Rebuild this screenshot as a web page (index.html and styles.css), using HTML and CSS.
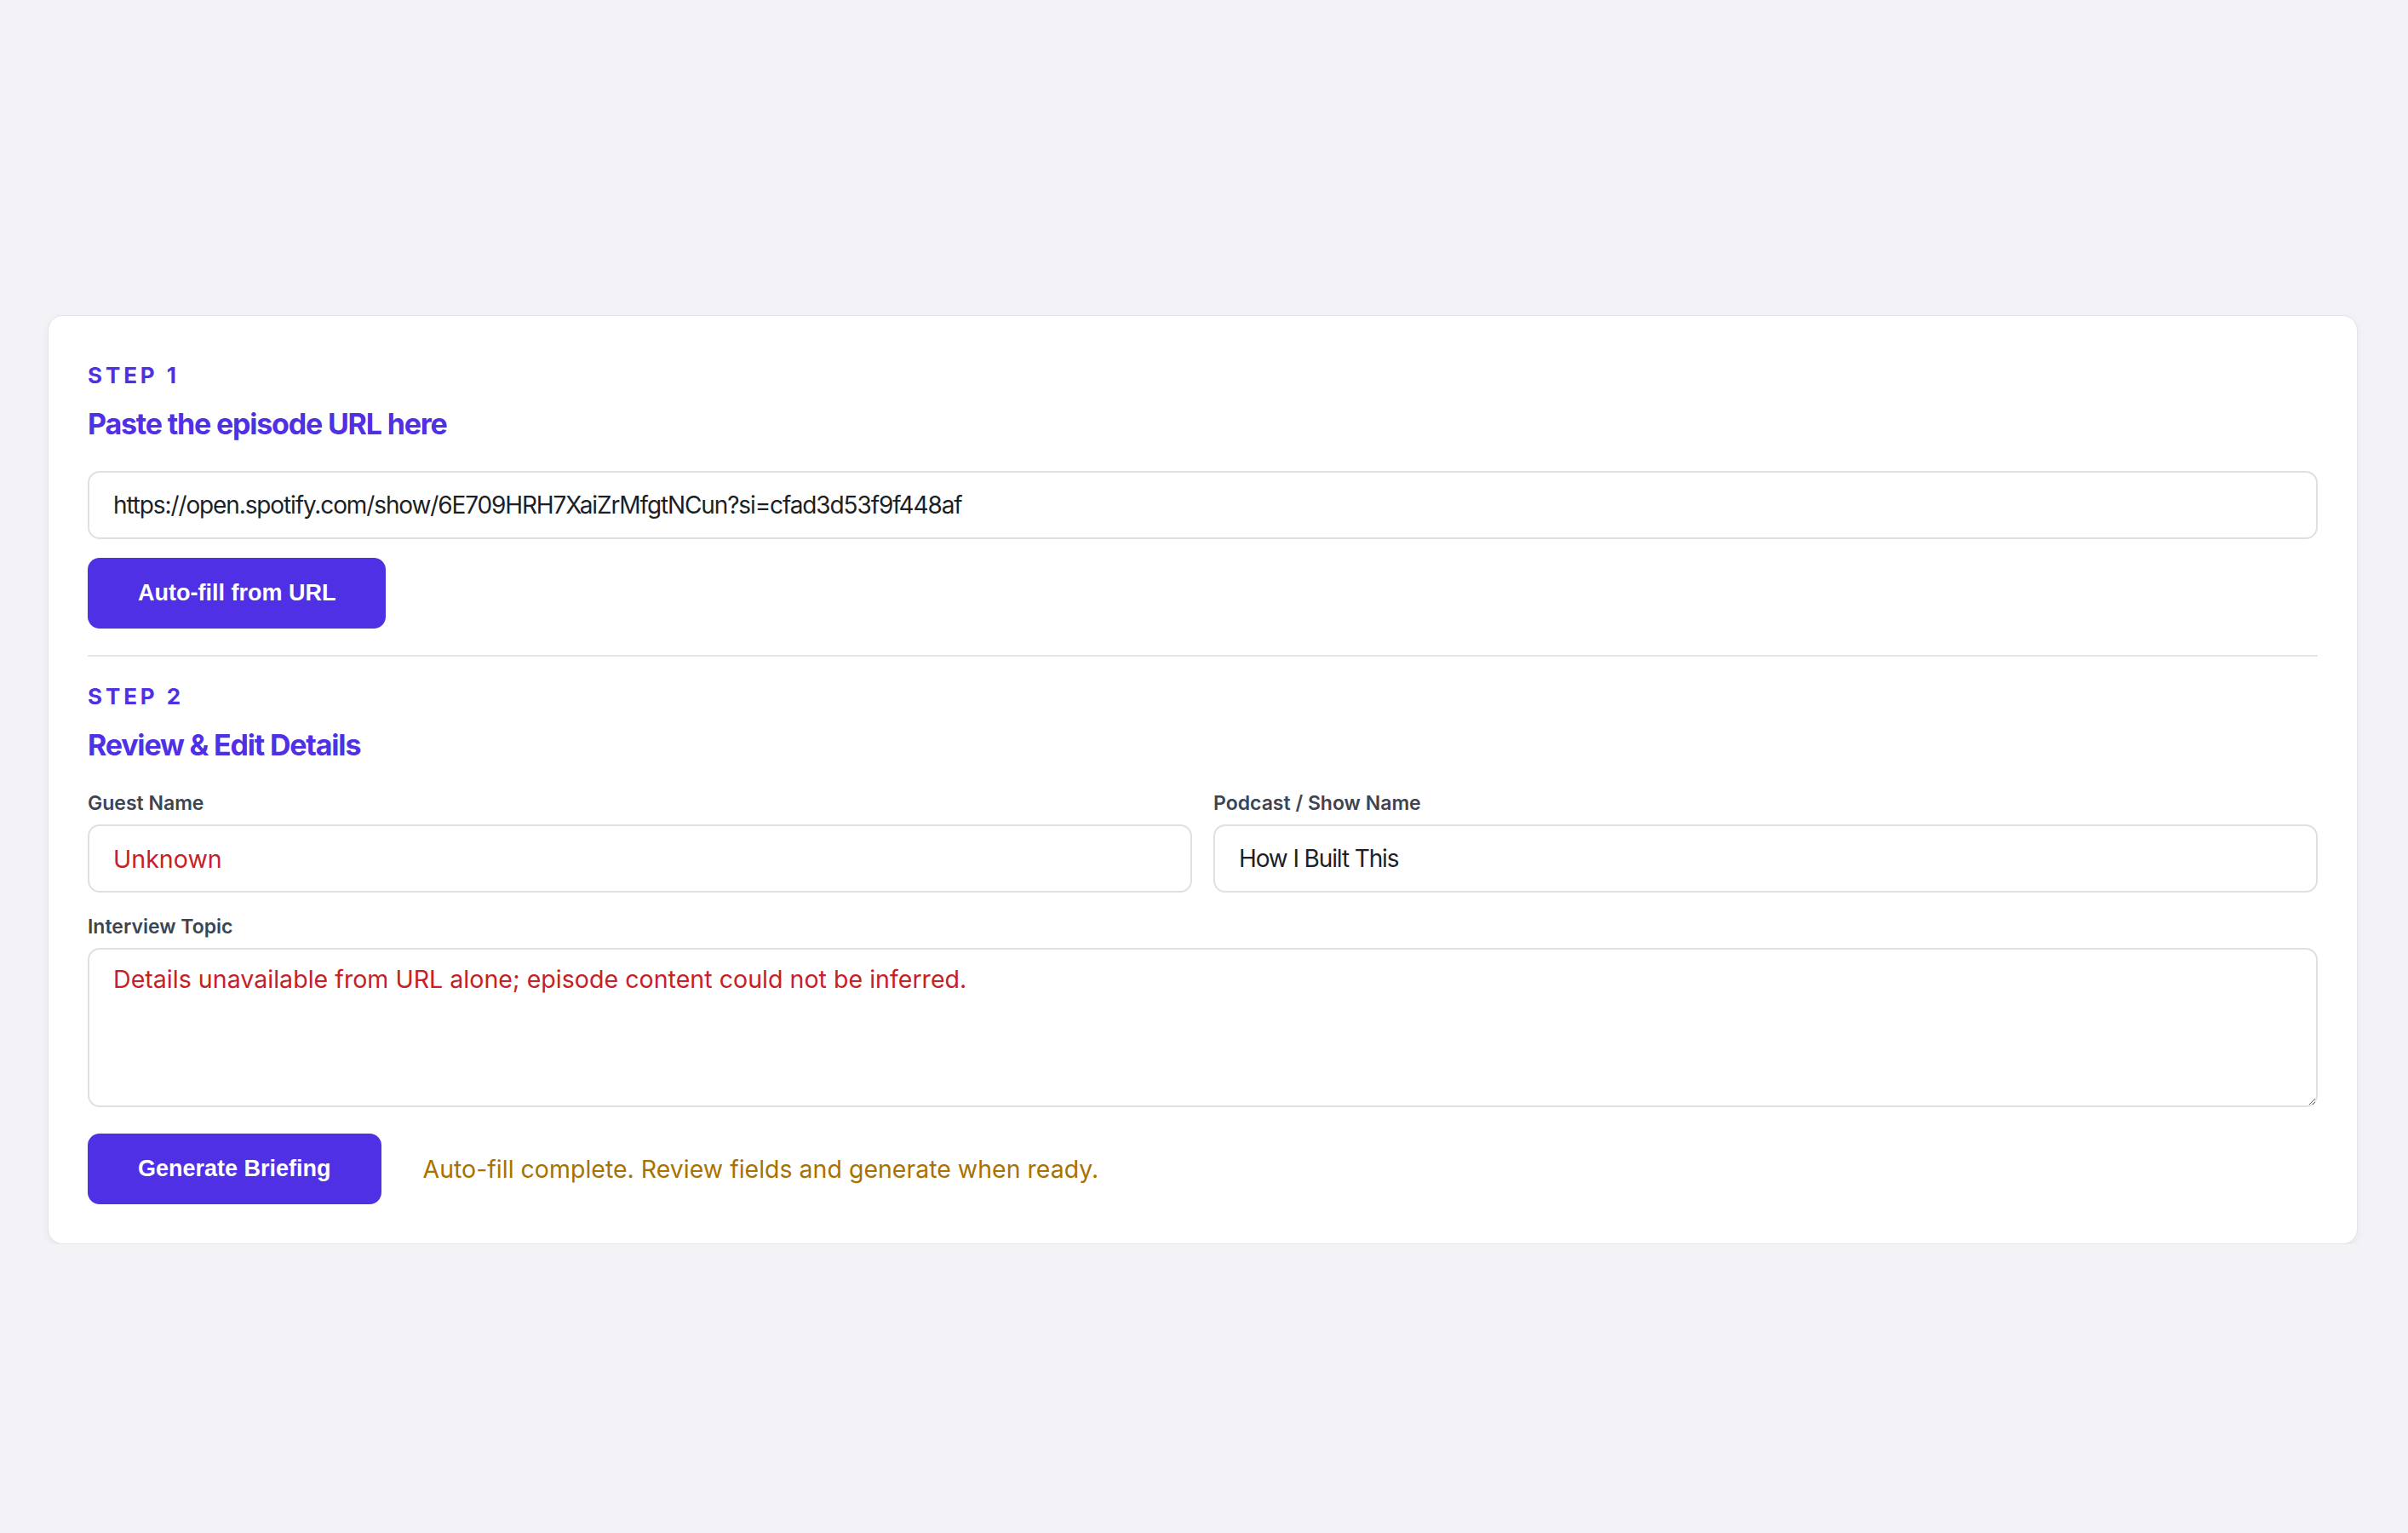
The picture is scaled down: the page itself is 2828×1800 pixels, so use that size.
FILE: index.html
```html
<!DOCTYPE html>
<html lang="en">
<head>
<meta charset="UTF-8" />
<meta name="viewport" content="width=device-width, initial-scale=1.0"/>
<title>Episode Briefing</title>
<link rel="stylesheet" href="styles.css">
</head>
<body>
<div class="page">
  <div class="card">
    <!-- Step 1: URL -->
    <section class="step">
      <div class="step-label">Step 1</div>
      <h2 class="step-title">Paste the episode URL here</h2>
      <input class="field" type="text" id="urlInput" value="https://open.spotify.com/show/6E709HRH7XaiZrMfgtNCun?si=cfad3d53f9f448af" />
      <div class="actions">
        <button class="btn">Auto-fill from URL</button>
      </div>
    </section>

    <hr class="divider" />

    <!-- Step 2: details -->
    <section class="step">
      <div class="step-label">Step 2</div>
      <h2 class="step-title">Review &amp; Edit Details</h2>
      <div class="row">
        <label class="field-group">
          <span class="field-label">Guest Name</span>
          <input class="field warn" type="text" id="guestInput" value="Unknown" />
        </label>
        <label class="field-group">
          <span class="field-label">Podcast / Show Name</span>
          <input class="field" type="text" id="showInput" value="How I Built This" />
        </label>
      </div>
      <label class="field-group topic">
        <span class="field-label">Interview Topic</span>
        <textarea class="field warn" id="topicInput">Details unavailable from URL alone; episode content could not be inferred.</textarea>
      </label>
      <div class="actions final">
        <button class="btn">Generate Briefing</button>
        <span class="status">Auto-fill complete. Review fields and generate when ready.</span>
      </div>
    </section>
  </div>
</div>
</body>
</html>
```

FILE: styles.css
```css
body {
  margin: 0;
  background: #f2f2f7;
  font-family: Inter, "Noto Sans", sans-serif;
  color: #1c1f26;
}
.page {
  padding: 370px 59px 0 56px;
}
.card {
  background: #fff;
  border: 1px solid #e3e3e9;
  border-radius: 18px;
  box-shadow: 0 3px 10px rgba(0, 0, 0, 0.05);
  padding: 54px 46px 46px;
}
.step {
  display: flex;
  flex-direction: column;
}
.step-label {
  font-size: 26px;
  line-height: 32px;
  font-weight: 700;
  letter-spacing: 0.15em;
  text-transform: uppercase;
  color: #5030e5;
}
.step-title {
  margin: 20px 0 34px;
  font-size: 34px;
  line-height: 42px;
  font-weight: 700;
  letter-spacing: -0.035em;
  color: #5030e5;
}
.field {
  box-sizing: border-box;
  width: 100%;
  height: 80px;
  padding: 0 28px;
  border: 2px solid #dfe0e6;
  border-radius: 14px;
  background: #fff;
  font-family: Inter, "Noto Sans", sans-serif;
  font-size: 28px;
  letter-spacing: -0.04em;
  color: #1c1f26;
}
.field.warn {
  font-size: 28.6px;
  letter-spacing: 0;
  color: #c62127;
}
textarea.field {
  display: block;
  height: 187px;
  padding: 18px 28px;
  line-height: 34px;
}
.actions {
  display: flex;
  align-items: center;
  gap: 49px;
  margin-top: 22px;
}
.actions.final {
  margin-top: 31px;
}
.btn {
  padding: 26px 59px;
  border: none;
  border-radius: 14px;
  background: #5030e5;
  color: #fff;
  font-family: "Liberation Sans", Arial, sans-serif;
  font-size: 27px;
  line-height: 31px;
  font-weight: 700;
  cursor: pointer;
}
.divider {
  margin: 31px 0;
  border: none;
  border-top: 2px solid #e5e5ea;
}
.row {
  display: grid;
  grid-template-columns: 1fr 1fr;
  gap: 25px;
}
.field-group {
  display: flex;
  flex-direction: column;
  gap: 12px;
}
.field-group.topic {
  margin-top: 27px;
}
.field-label {
  font-size: 23px;
  line-height: 26px;
  font-weight: 600;
  color: #3d4452;
}
.status {
  font-size: 28.5px;
  color: #a87200;
}
```
